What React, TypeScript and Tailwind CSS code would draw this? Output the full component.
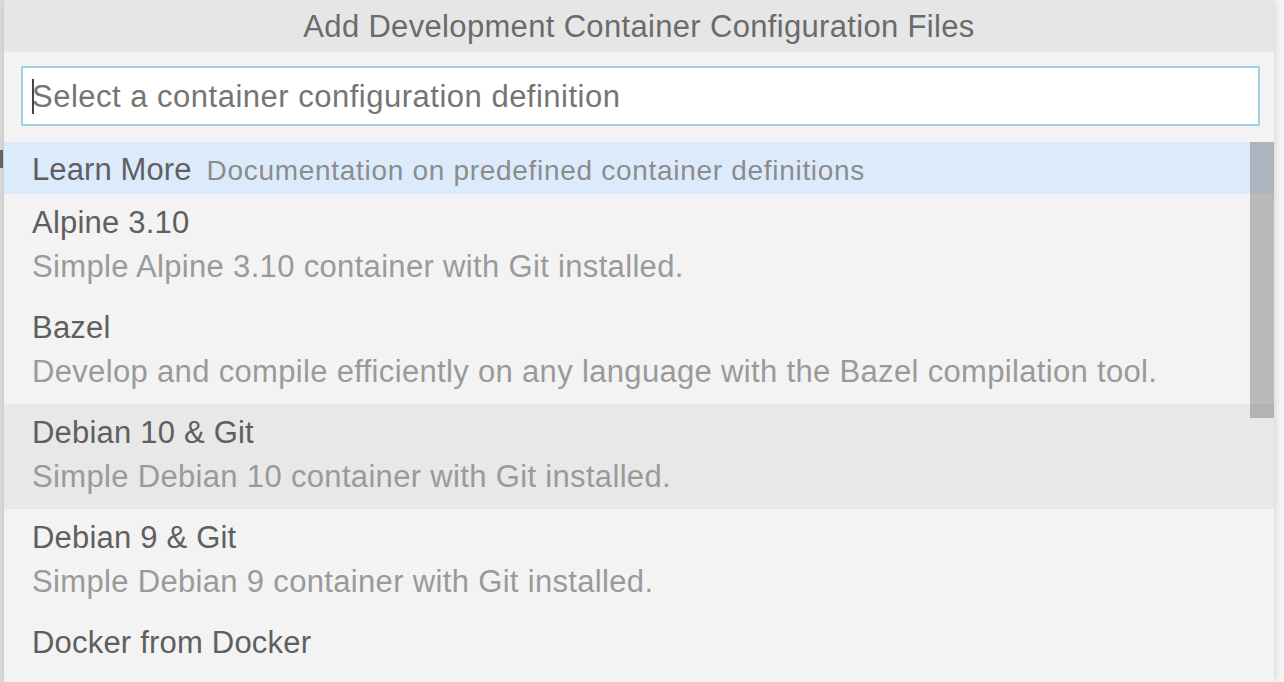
const items = [
  { label: "Alpine 3.10", detail: "Simple Alpine 3.10 container with Git installed." },
  { label: "Bazel", detail: "Develop and compile efficiently on any language with the Bazel compilation tool." },
  { label: "Debian 10 & Git", detail: "Simple Debian 10 container with Git installed.", hover: true },
  { label: "Debian 9 & Git", detail: "Simple Debian 9 container with Git installed." },
  { label: "Docker from Docker", detail: "" },
];

export default function App() {
  return (
    <div
      className="relative flex h-[682px] w-[1284px] overflow-hidden bg-[#f7f7f7]"
      style={{ fontFamily: '"Liberation Sans", Arial, sans-serif' }}
    >
      {/* editor behind the widget */}
      <div className="relative w-[4px] shrink-0 overflow-hidden bg-[#e2e2e2]">
        <div className="mt-[150px] h-[18px] w-[3px] bg-[#6a6a6a]" />
      </div>

      <div className="relative flex w-[1270px] shrink-0 flex-col overflow-hidden bg-[#f3f3f3] shadow-[0_0_10px_rgba(0,0,0,0.18)]">
        <div className="flex h-[52px] shrink-0 items-center justify-center bg-[#e6e6e6] pt-[2px] text-[31px] tracking-[0.33px] text-[#6b6b6b]">
          Add Development Container Configuration Files
        </div>

        <div className="relative mb-[16px] ml-[17px] mr-[14px] mt-[14px] flex h-[60px] shrink-0 items-center border-2 border-[#a6d0ea] bg-white pl-[9px] pt-[3px]">
          <span className="absolute left-[9px] top-[11px] h-[35px] w-[2px] bg-[#444]" />
          <span className="text-[31px] tracking-[0.5px] text-[#757575]">Select a container configuration definition</span>
        </div>

        <div className="relative flex-1 overflow-hidden">
          <div className="flex h-[52px] items-center gap-[15px] bg-[#dcebfb] pl-[28px] pt-[5px]">
            <span className="text-[31px] tracking-[0.1px] text-[#5f5f5f]">Learn More</span>
            <span className="text-[28px] tracking-[0.7px] text-[#8c8c8c]">Documentation on predefined container definitions</span>
          </div>
          {items.map((it, i) => (
            <div
              key={i}
              className={`h-[105px] pl-[28px] pt-[7px] ${it.hover ? "bg-[#e8e8e8]" : ""}`}
            >
              <div className="h-[44px] text-[31px] leading-[44px] tracking-[0.2px] text-[#5f5f5f]">{it.label}</div>
              <div className="h-[44px] text-[31px] leading-[44px] tracking-[0.33px] text-[#9a9a9a]">{it.detail}</div>
            </div>
          ))}

          <div className="absolute right-0 top-0 h-[276px] w-[24px] bg-[rgba(100,100,100,0.4)]" />
        </div>
      </div>
    </div>
  );
}
